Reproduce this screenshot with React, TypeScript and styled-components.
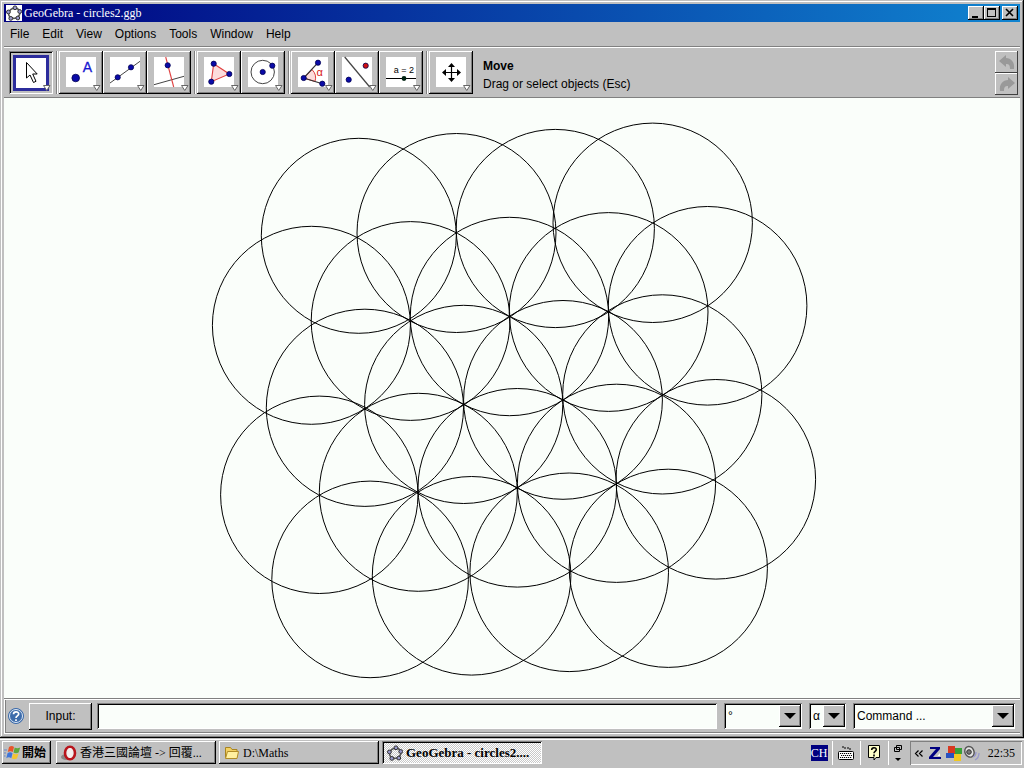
import React from 'react';
import styled, { createGlobalStyle, css } from 'styled-components';

const sans = '"Liberation Sans", Arial, sans-serif';
const serif = '"Liberation Serif", "Noto Sans CJK TC", serif';
const face = '#c0c0c0';
const paper = '#fafefa';
const navy = '#000080';
const pointBlue = '#0a0aa8';

const raised = css`
  box-shadow: inset -1px -1px #000, inset 1px 1px #fff, inset -2px -2px #808080;
`;
const sunken = css`
  box-shadow: inset 1px 1px #808080, inset -1px -1px #fff, inset 2px 2px #000;
`;

const GlobalStyle = createGlobalStyle`
  *, *::before, *::after { box-sizing: border-box; }
  body { margin: 0; background: ${face}; color: #000; font: 12px/16px ${sans}; }
  button { border: 0; margin: 0; padding: 0; background: ${face}; color: inherit; font: inherit; }
  svg { display: block; }
`;

const Desktop = styled.div`
  display: flex;
  flex-direction: column;
  height: 100vh;
  min-height: 400px;
`;

const AppWindow = styled.main`
  flex: 1;
  min-height: 0;
  display: flex;
  flex-direction: column;
  padding: 4px;
  background: ${face};
  box-shadow: inset -1px -1px #000, inset 1px 1px ${face}, inset -2px -2px #808080, inset 2px 2px #fff;
`;

const TitleBar = styled.header`
  flex: none;
  display: flex;
  align-items: center;
  height: 18px;
  padding: 0 2px 0 2px;
  background: linear-gradient(90deg, ${navy}, #1084d0);
  color: #fff;
`;

const TitleIcon = styled.span`
  background: #fff;
`;

const Title = styled.h1`
  flex: 1;
  margin: 0 0 0 2px;
  font: 12px/16px ${serif};
`;

const CaptionButton = styled.button<{ $apart?: boolean }>`
  width: 16px;
  height: 14px;
  margin-left: ${p => (p.$apart ? 2 : 0)}px;
  ${raised}
`;

const MenuBar = styled.nav`
  flex: none;
  display: flex;
  gap: 13px;
  align-items: center;
  height: 25px;
  padding: 0 6px;
  border-bottom: 1px solid #808080;
`;

const MenuItem = styled.button`
  line-height: 20px;
`;

const ToolBar = styled.section`
  flex: none;
  display: flex;
  align-items: center;
  height: 51px;
  padding: 0 2px 0 5px;
  border-top: 1px solid #fff;
  border-bottom: 1px solid #808080;
`;

const ToolGroup = styled.div`
  display: flex;
  padding-right: 3px;

  & + & {
    padding-left: 2px;
    border-left: 1px solid #808080;
    box-shadow: inset 1px 0 #fff;
  }
`;

const ToolButton = styled.button<{ $active?: boolean }>`
  width: 44px;
  height: 43px;
  ${p => (p.$active ? sunken : raised)}
`;

const ToolHelp = styled.div`
  flex: 1;
  padding: 4px 0 0 7px;
  line-height: 18px;
`;

const ToolName = styled.strong`
  display: block;
`;

const UndoStack = styled.div`
  display: flex;
  flex-direction: column;
`;

const UndoButton = styled.button`
  width: 23px;
  height: 22px;
  box-shadow: inset -1px -1px #404040, inset 1px 1px #fff;
`;

const DrawingPad = styled.section`
  flex: 1;
  min-height: 0;
  background: ${paper};

  svg {
    width: 100%;
    height: 100%;
  }
`;

const InputBar = styled.form`
  flex: none;
  display: flex;
  align-items: center;
  height: 36px;
  padding: 0 5px 1px 3px;
  border-top: 1px solid #808080;
  box-shadow: inset 1px 1px #fff, inset 0 -1px #fff, inset 0 -2px #808080, inset 2px 0 #808080;
`;

const HelpButton = styled.button`
  width: 18px;
  height: 18px;
`;

const InputLabel = styled.label`
  width: 63px;
  height: 27px;
  margin: 0 5px 0 4px;
  text-align: center;
  line-height: 26px;
  ${raised}
`;

const CommandInput = styled.input`
  flex: 1;
  min-width: 0;
  height: 26px;
  padding: 0 4px;
  border: 0;
  background: ${paper};
  font: 12px/16px ${sans};
  ${sunken}
`;

const Combo = styled.div<{ $width: number }>`
  display: grid;
  width: ${p => p.$width}px;
  height: 26px;
  margin-left: 7px;
  background: ${paper};
  ${sunken}
`;

const ComboSelect = styled.select`
  grid-area: 1 / 1;
  width: 100%;
  padding: 0 0 0 4px;
  border: 0;
  appearance: none;
  background: none;
  color: #000;
  font: 12px/16px ${sans};
`;

const ComboArrow = styled.span`
  grid-area: 1 / 1;
  justify-self: end;
  align-self: center;
  width: 22px;
  height: 22px;
  margin-right: 1px;
  background: ${face};
  pointer-events: none;
  ${raised}
`;

const TaskBar = styled.footer`
  flex: none;
  display: flex;
  align-items: center;
  gap: 3px;
  height: 30px;
  padding: 0 2px 2px;
  border-top: 1px solid ${face};
  box-shadow: inset 0 1px #fff;
  font: 12px/16px ${serif};
`;

const StartButton = styled.button`
  display: flex;
  align-items: center;
  gap: 1px;
  width: 49px;
  height: 23px;
  margin-right: 2px;
  padding-left: 2px;
  font-weight: 700;
  ${raised}
`;

const TaskButton = styled.button<{ $active?: boolean }>`
  display: flex;
  align-items: center;
  gap: 3px;
  flex: 0 1 160px;
  min-width: 0;
  height: 23px;
  padding-left: 5px;
  white-space: nowrap;
  overflow: hidden;
  ${p =>
    p.$active
      ? css`
          background: repeating-conic-gradient(#fff 0 25%, #c8c8c8 0 50%) 0 0 / 2px 2px;
          font-weight: 700;
          font-size: 13px;
          ${sunken}
        `
      : raised}
`;

const LanguageBar = styled.div`
  display: flex;
  align-items: center;
  margin-left: auto;
`;

const LanguageBadge = styled.button`
  width: 17px;
  height: 16px;
  margin-right: 4px;
  background: ${navy};
  color: #fff;
`;

const LanguageButton = styled.button`
  display: flex;
  align-items: center;
  justify-content: center;
  width: 28px;
  height: 24px;
  border-left: 1px solid #fff;
`;

const WindowControls = styled.button`
  width: 19px;
  height: 24px;
  border-left: 1px solid #fff;
`;

const Tray = styled.div`
  display: flex;
  align-items: center;
  height: 24px;
  padding: 0 7px 0 4px;
  box-shadow: inset 1px 1px #808080, inset -1px -1px #fff;
`;

const Clock = styled.time`
  margin-left: 2px;
`;

const CIRCLES: [number, number, number][] = [
  [358.8, 235.8, 97.5], [456.5, 233, 99.5], [555.3, 228.5, 99.1], [652.7, 222.8, 99.7],
  [311.4, 325.3, 99], [410.6, 321, 99.4], [509.5, 316.5, 99.2], [608.6, 312, 99.4], [707.6, 305.8, 99.3],
  [364.9, 407.8, 98.6], [463.7, 404.4, 99.1], [563, 399.9, 99.4], [662.3, 394.4, 99.6],
  [319.3, 494.8, 98.7], [418.3, 492.3, 99], [517.3, 487.8, 99.3], [616.5, 483.3, 99.1], [715.8, 479.3, 99.8],
  [370.1, 579.4, 98.3], [471.6, 575.8, 99.3], [569.2, 572.3, 99.3], [668.3, 568.3, 99.1],
];

function GeoLogo() {
  const dots = [[9, 2.8], [13.7, 6.5], [11.8, 13], [4.8, 13.4], [2.4, 7]];
  return (
    <svg width="16" height="16" viewBox="0 0 16 16" aria-hidden="true">
      <ellipse cx="8.2" cy="8.3" rx="5.8" ry="5" fill="none" stroke="#555" strokeWidth="1.6" transform="rotate(-20 8 8)" />
      {dots.map(([x, y]) => (
        <circle key={x} cx={x} cy={y} r="1.9" fill="#9999cc" stroke="#333" strokeWidth="1" />
      ))}
    </svg>
  );
}

function Dot({ x, y, r = 3, fill = pointBlue }: { x: number; y: number; r?: number; fill?: string }) {
  return <circle cx={x} cy={y} r={r - 0.4} fill={fill} stroke="#000050" strokeWidth="0.8" />;
}

function ToolFace({ active, children }: { active?: boolean; children: React.ReactNode }) {
  return (
    <svg width="44" height="43" viewBox="0 0 44 43" aria-hidden="true">
      {active && <rect x="5.5" y="5.5" width="33" height="33" fill="#fff" stroke="#2c2c9c" strokeWidth="3" />}
      {!active && <rect x="7" y="6" width="30" height="30" fill="#fff" />}
      {children}
      <path d="M34.5 34.5h6.500l-3.250 5z" fill="#fff" stroke="#666" strokeWidth="1" />
    </svg>
  );
}

const ink = { stroke: '#444', strokeWidth: 1, fill: 'none' };

const GROUPS: { name: string; active?: boolean; art: React.ReactNode }[][] = [
  [
    {
      name: 'Move',
      active: true,
      art: <path d="M17.5 11.5v15.500l3.500-3 3.500 7.500 2.500-1.200-3.300-7.300h4.500z" fill="#fff" stroke="#000" strokeWidth="1" />,
    },
  ],
  [
    {
      name: 'New point',
      art: (
        <>
          <Dot x={16.7} y={27} r={4.2} />
          <text x="28.5" y="21" textAnchor="middle" fontFamily="Liberation Sans" fontSize="14" fill="#1515d0" stroke="#1515d0" strokeWidth="0.3">A</text>
        </>
      ),
    },
    {
      name: 'Line through two points',
      art: (
        <>
          <path d="M7 32L37 10.3" {...ink} />
          <Dot x={14.7} y={26.3} />
          <Dot x={28} y={16.3} />
        </>
      ),
    },
    {
      name: 'Perpendicular line',
      art: (
        <>
          <path d="M7 33.7L37 25.3" {...ink} />
          <path d="M18.7 6L26.7 36" stroke="#e04040" strokeWidth="1.1" />
          <Dot x={20.7} y={14.3} />
        </>
      ),
    },
  ],
  [
    {
      name: 'Polygon',
      art: (
        <>
          <path d="M16.7 12.7L32.3 23L14.3 30.7z" fill="#fcdcdc" stroke="#e04040" strokeWidth="1.1" />
          <Dot x={16.7} y={12.7} />
          <Dot x={32.3} y={23} />
          <Dot x={14.3} y={30.7} />
        </>
      ),
    },
    {
      name: 'Circle with center through point',
      art: (
        <>
          <circle cx="21.7" cy="21" r="11.7" {...ink} />
          <Dot x={21.7} y={21} />
          <Dot x={31.3} y={14.7} />
        </>
      ),
    },
  ],
  [
    {
      name: 'Angle',
      art: (
        <>
          <path d="M12.7 27L21 18.6A11.7 11.7 0 0 1 24 30.5z" fill="#fcdcdc" stroke="#e04040" strokeWidth="1" />
          <path d="M27 11.7L12.7 27L31.3 32.7" stroke="#333" strokeWidth="1.2" fill="none" />
          <text x="28.7" y="25" textAnchor="middle" fontFamily="Liberation Sans" fontSize="11" fill="#d82020">α</text>
          <Dot x={27} y={11.7} />
          <Dot x={12.7} y={27} />
          <Dot x={31.3} y={32.7} />
        </>
      ),
    },
    {
      name: 'Mirror object at line',
      art: (
        <>
          <path d="M9.7 6L34.7 36" {...ink} strokeWidth={1.2} />
          <Dot x={13.7} y={28.7} />
          <Dot x={30.7} y={14.7} fill="#d01010" />
        </>
      ),
    },
    {
      name: 'Slider',
      art: (
        <>
          <text x="25" y="22" textAnchor="middle" fontFamily="Liberation Sans" fontSize="9" fill="#000">a = 2</text>
          <path d="M7 27.5H37" stroke="#000" strokeWidth="1" />
          <circle cx="25" cy="27.5" r="2.4" fill="#021" />
        </>
      ),
    },
  ],
  [
    {
      name: 'Move drawing pad',
      art: (
        <>
          <path d="M15 21.5H30M22.5 14V29" stroke="#000" strokeWidth="1.2" />
          <path d="M22.5 12l3.5 4h-7zM22.5 31l3.5-4h-7zM13 21.5l4-3.5v7zM32 21.5l-4-3.5v7z" fill="#000" />
        </>
      ),
    },
  ],
];

function Dropdown({ label, width, value }: { label: string; width: number; value: string }) {
  return (
    <Combo $width={width}>
      <ComboSelect aria-label={label} defaultValue={value}>
        <option>{value}</option>
      </ComboSelect>
      <ComboArrow>
        <svg width="22" height="22" viewBox="0 0 22 22" aria-hidden="true">
          <path d="M5 8h12l-6 6z" fill="#000" />
        </svg>
      </ComboArrow>
    </Combo>
  );
}

const UNDO_ARROW = 'M4 10L11 4V7C16 7 20 11 19 18H15C15 14 14 13 11 13V16z';

export default function App() {
  return (
    <>
      <GlobalStyle />
      <Desktop>
        <AppWindow>
          <TitleBar>
            <TitleIcon><GeoLogo /></TitleIcon>
            <Title>GeoGebra - circles2.ggb</Title>
            <CaptionButton aria-label="Minimize">
              <svg width="16" height="14" viewBox="0 0 16 14"><path d="M4 10h6v2H4z" /></svg>
            </CaptionButton>
            <CaptionButton aria-label="Maximize">
              <svg width="16" height="14" viewBox="0 0 16 14"><path d="M3 2h9v9H3zM4 4v6h7V4z" fillRule="evenodd" /></svg>
            </CaptionButton>
            <CaptionButton aria-label="Close" $apart>
              <svg width="16" height="14" viewBox="0 0 16 14"><path d="M4 3l7 7M11 3l-7 7" stroke="#000" strokeWidth="1.600" /></svg>
            </CaptionButton>
          </TitleBar>

          <MenuBar aria-label="Main menu">
            {['File', 'Edit', 'View', 'Options', 'Tools', 'Window', 'Help'].map(item => (
              <MenuItem key={item}>{item}</MenuItem>
            ))}
          </MenuBar>

          <ToolBar aria-label="Tools">
            {GROUPS.map(group => (
              <ToolGroup key={group[0].name}>
                {group.map(tool => (
                  <ToolButton key={tool.name} aria-label={tool.name} $active={tool.active}>
                    <ToolFace active={tool.active}>{tool.art}</ToolFace>
                  </ToolButton>
                ))}
              </ToolGroup>
            ))}
            <ToolHelp>
              <ToolName>Move</ToolName>
              Drag or select objects (Esc)
            </ToolHelp>
            <UndoStack>
              <UndoButton aria-label="Undo">
                <svg width="23" height="22" viewBox="0 0 23 22"><path d={UNDO_ARROW} fill="#999" /></svg>
              </UndoButton>
              <UndoButton aria-label="Redo">
                <svg width="23" height="22" viewBox="0 0 23 22"><path d={UNDO_ARROW} fill="#999" transform="matrix(-1 0 0 1 24 0)" /></svg>
              </UndoButton>
            </UndoStack>
          </ToolBar>

          <DrawingPad aria-label="Drawing pad">
            <svg viewBox="4 98 1016 600" fill="none" stroke="#000" strokeWidth="1">
              {CIRCLES.map(([cx, cy, r]) => (
                <circle key={`${cx}-${cy}`} cx={cx} cy={cy} r={r} />
              ))}
            </svg>
          </DrawingPad>

          <InputBar onSubmit={e => e.preventDefault()}>
            <HelpButton type="button" aria-label="Help">
              <svg width="18" height="18" viewBox="0 0 18 18">
                <circle cx="9" cy="9" r="7.500" fill="#3d6cab" stroke="#3d6cab" />
                <circle cx="9" cy="9" r="6.500" fill="none" stroke="#dde8f5" />
                <path d="M6.500 7.300C6.500 4 11.700 4.200 11.700 7C11.700 9 9 8.800 9 11M9 12.200v1.800" fill="none" stroke="#fff" strokeWidth="1.700" />
              </svg>
            </HelpButton>
            <InputLabel htmlFor="command-line">Input:</InputLabel>
            <CommandInput id="command-line" type="text" />
            <Dropdown label="Symbols" width={78} value="°" />
            <Dropdown label="Greek letters" width={37} value="α" />
            <Dropdown label="Commands" width={162} value="Command ..." />
          </InputBar>
        </AppWindow>

        <TaskBar>
          <StartButton>
            <svg width="17" height="16" viewBox="0 0 17 16" aria-hidden="true">
              <path d="M5 2q3-2 5 0l-1.200 5q-2.500-1.500-5 0z" fill="#e8552a" />
              <path d="M10.700 2.400q2.500 1.500 5.500 0l-1.600 5q-2.500 1.500-5.100 0z" fill="#5fa83a" />
              <path d="M3.500 8.200q2.700-1.700 5 0l-1.200 5q-2.500-1.700-5 0z" fill="#3f75d8" />
              <path d="M9.200 8.600q2.500 1.500 5.300 0l-1.500 5q-2.500 1.500-5.100 0z" fill="#f4c430" />
              <path d="M0 5h3M0 8h2M0 11h1.500" stroke="#6484c8" />
            </svg>
            開始
          </StartButton>
          <TaskButton>
            <svg width="16" height="16" viewBox="0 0 16 16" aria-hidden="true">
              <ellipse cx="5" cy="12" rx="5" ry="3" fill="#888" />
              <ellipse cx="9" cy="8" rx="5" ry="6.300" fill="#eee" stroke="#b8141c" strokeWidth="2.600" />
              <ellipse cx="9" cy="8" rx="2.300" ry="5" fill="#f5eeee" />
            </svg>
            香港三國論壇 -&gt; 回覆...
          </TaskButton>
          <TaskButton>
            <svg width="16" height="16" viewBox="0 0 16 16" aria-hidden="true">
              <path d="M1.500 12.500v-10h5l1.500 2h5v8z" fill="#f3d163" stroke="#a88420" />
              <path d="M1.500 13.500l2-7h11l-1.500 7z" fill="#fff0a0" stroke="#b08c28" />
            </svg>
            D:\Maths
          </TaskButton>
          <TaskButton $active>
            <GeoLogo />
            GeoGebra - circles2....
          </TaskButton>

          <LanguageBar>
            <LanguageBadge>CH</LanguageBadge>
            <LanguageButton aria-label="Keyboard">
              <svg width="16" height="16" viewBox="0 0 16 16">
                <path d="M5 1v2h7v3" fill="none" stroke="#000" strokeDasharray="2 1" />
                <rect x="0.500" y="6.500" width="15" height="8" rx="1" fill="#fff" stroke="#000" />
                <path d="M2 8.500h12M3 10.500h11M2 12.500h12" stroke="#000" strokeWidth="1.200" strokeDasharray="1.200 0.800" />
              </svg>
            </LanguageButton>
            <LanguageButton aria-label="Input method help">
              <svg width="14" height="17" viewBox="0 0 14 17">
                <path d="M1.500 1.500h11v12h-3.500l-2 2.500v-2.500h-5.500z" fill="#ffffc8" stroke="#000" />
                <path d="M4.700 6C4.700 3 9.300 3 9.300 5.500C9.300 7.500 7 7.200 7 9.200M7 10.500v2" fill="none" stroke="#000" strokeWidth="1.600" />
              </svg>
            </LanguageButton>
            <WindowControls aria-label="Language bar options">
              <svg width="18" height="24" viewBox="0 0 18 24">
                <path d="M7.500 4.500h5v4h-5zM5.500 6.500h5v4h-5z" fill={face} stroke="#000" />
                <path d="M6 17h6l-3 3z" />
              </svg>
            </WindowControls>
          </LanguageBar>
          <Tray>
            <svg width="72" height="18" viewBox="0 0 72 18" aria-hidden="true">
              <path d="M4.500 6.500l-3 3 3 3M8.500 6.500l-3 3 3 3" fill="none" stroke="#000" strokeWidth="1.200" />
              <path d="M16 3h10v2l-7 8h8v2H15v-2l7-8h-6z" fill={navy} />
              <path d="M23.500 12l2.500-3v3z" fill="#fff" />
              <path d="M34 2h7v8h-7z" fill="#d83820" />
              <path d="M41 4h7v6h-7z" fill="#38a038" />
              <path d="M32 9h8v5h-8z" fill="#2850c0" />
              <path d="M40 10h7v7h-7z" fill="#f0c820" />
              <ellipse cx="55.500" cy="8" rx="4.500" ry="5.500" fill="#e4e4e4" stroke="#555" strokeWidth="1.400" transform="rotate(-25 55 8)" />
              <circle cx="55" cy="8" r="2.300" fill="#777" stroke="#333" />
              <path d="M59 13q3-1 3-5M61 16q4-2 4-7" fill="none" stroke="#9898cc" strokeWidth="1.300" />
            </svg>
            <Clock>22:35</Clock>
          </Tray>
        </TaskBar>
      </Desktop>
    </>
  );
}
